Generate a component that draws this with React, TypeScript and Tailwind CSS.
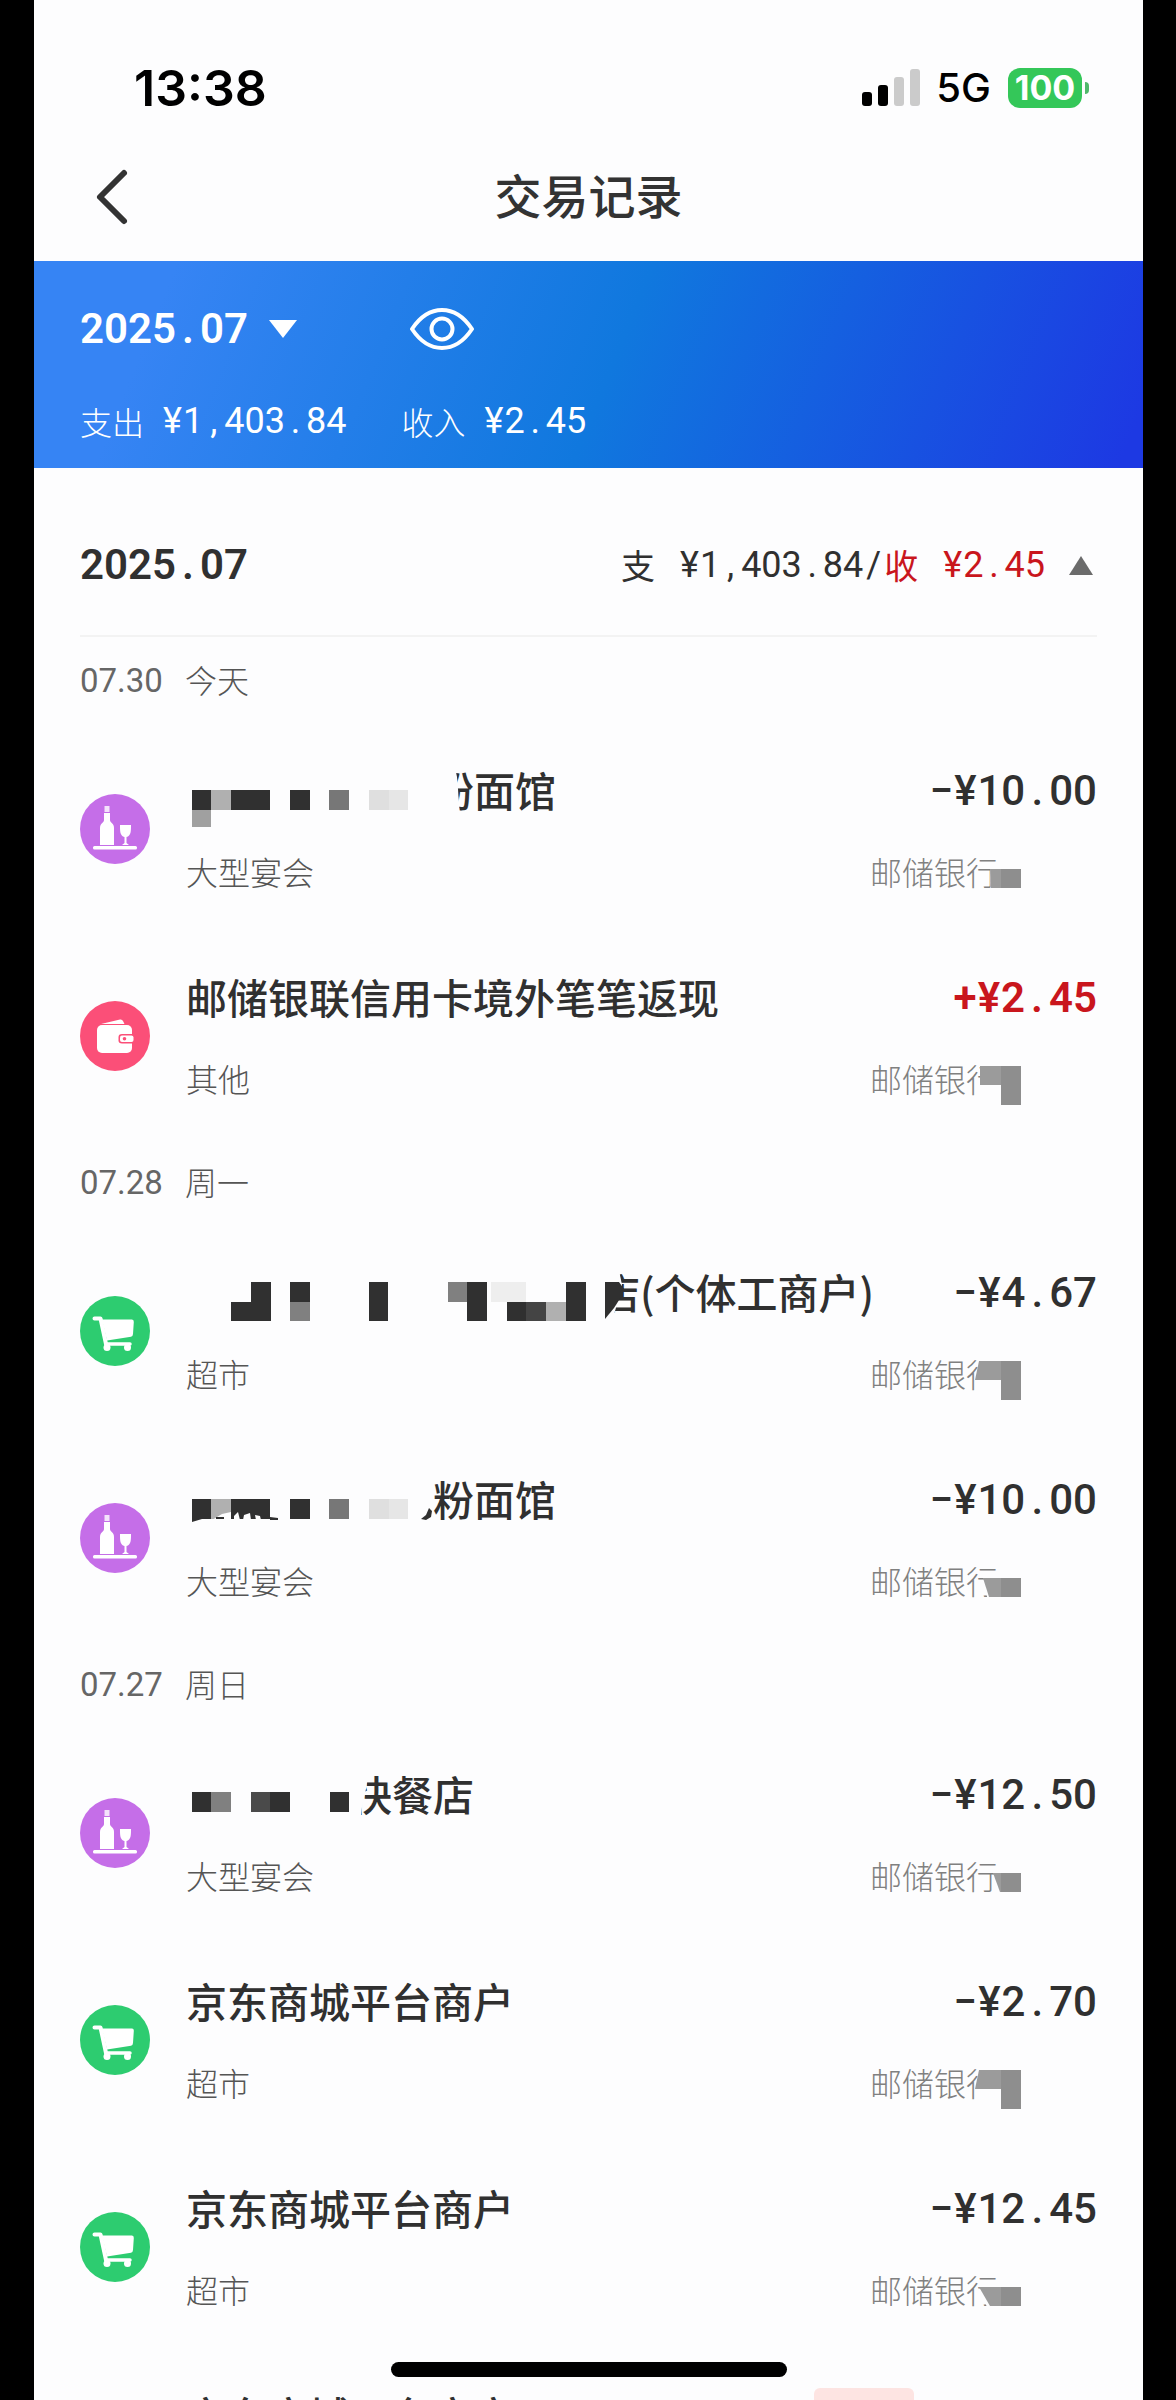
import React from "react";

type Category = "banquet" | "wallet" | "market";
type Rect = [number, number, number, number, string];

interface Mask {
    width: number;
    rects: Rect[];
    // erased parts of the neighbouring glyph
    erase?: string;
    // leftovers of dark strokes
    ink?: string;
}

interface Transaction {
    title: string;
    mask?: Mask;
    category: Category;
    label: string;
    amount: string;
    income?: boolean;
    bank: "low" | "tall";
    cut: [number, number];
}

interface DayGroup {
    date: string;
    day: string;
    items: Transaction[];
}

const DARK = "#303030";

const noodleRects: Rect[] = [
    [8, 27, 19, 20, DARK],
    [27, 27, 20, 20, "#b0b0b0"],
    [47, 27, 39, 20, DARK],
    [106, 27, 20, 20, DARK],
    [145, 27, 20, 20, "#777777"],
    [185, 27, 20, 20, "#dfdfdf"],
    [205, 27, 19, 20, "#e6e6e6"],
];

const groups: DayGroup[] = [
    {
        date: "07.30",
        day: "今天",
        items: [
            {
                title: "粉面馆",
                mask: { width: 247, rects: [...noodleRects, [8, 47, 19, 17, "#a0a0a0"]], erase: "M246 0H270L273 14L274 26L276 56H246Z" },
                category: "banquet",
                label: "大型宴会",
                amount: "−¥10.00",
                bank: "low",
                cut: [120, 121],
            },
            {
                title: "邮储银联信用卡境外笔笔返现",
                category: "wallet",
                label: "其他",
                amount: "+¥2.45",
                income: true,
                bank: "tall",
                cut: [110, 110],
            },
        ],
    },
    {
        date: "07.28",
        day: "周一",
        items: [
            {
                title: "店(个体工商户)",
                mask: {
                    width: 413,
                    rects: [
                        [47, 37, 20, 19, DARK],
                        [67, 17, 20, 39, DARK],
                        [106, 17, 20, 20, DARK],
                        [106, 37, 20, 19, "#808080"],
                        [185, 17, 19, 39, DARK],
                        [264, 17, 19, 20, "#808080"],
                        [283, 17, 20, 39, DARK],
                        [307, 17, 35, 20, "#eeeeee"],
                        [323, 37, 19, 19, DARK],
                        [342, 37, 20, 19, "#444444"],
                        [362, 37, 20, 19, "#b0b0b0"],
                        [382, 17, 20, 39, DARK],
                    ],
                    erase: "M412 0H434L438 20L434 36L428 56H412Z",
                    ink: "M421 17H435L440 24L437 32L430 43L421 54Z",
                },
                category: "market",
                label: "超市",
                amount: "−¥4.67",
                bank: "tall",
                cut: [109, 105],
            },
            {
                title: "粉面馆",
                mask: {
                    width: 247,
                    rects: noodleRects,
                    erase: "M28 48L38 42L47 40V48ZM50 48V44L54 40L56 48ZM59 48L60 43L66 41L67 48ZM72 48L71 43L76 44L77 48Z",
                    ink: "M237 47L242 43L245 36L248 39L247 45L242 48ZM86 45L94 46V48H86ZM8 47H18L8 50ZM32 45H40V47H32Z",
                },
                category: "banquet",
                label: "大型宴会",
                amount: "−¥10.00",
                bank: "low",
                cut: [113, 119],
            },
        ],
    },
    {
        date: "07.27",
        day: "周日",
        items: [
            {
                title: "快餐店",
                mask: {
                    width: 165,
                    rects: [
                        [8, 25, 19, 20, DARK],
                        [27, 25, 20, 20, "#808080"],
                        [67, 25, 19, 20, "#4a4a4a"],
                        [86, 25, 20, 20, DARK],
                        [146, 25, 19, 20, DARK],
                    ],
                    erase: "M166 0H185L182 22L178 40L176 56H166Z",
                },
                category: "banquet",
                label: "大型宴会",
                amount: "−¥12.50",
                bank: "low",
                cut: [123, 130],
            },
            {
                title: "京东商城平台商户",
                category: "market",
                label: "超市",
                amount: "−¥2.70",
                bank: "tall",
                cut: [109, 105],
            },
            {
                title: "京东商城平台商户",
                category: "market",
                label: "超市",
                amount: "−¥12.45",
                bank: "low",
                cut: [109, 120],
            },
        ],
    },
];

// Punctuation takes a full digit cell, so that amounts line up in columns
const Figures: React.FC<{ value: string; small?: boolean }> = ({ value, small }) => (
    <span className="block font-['Roboto','Noto_Sans_CJK_SC',sans-serif] whitespace-nowrap">
        {value.split(/([^0-9])/).filter(Boolean).map((part, i) =>
            /[0-9]/.test(part) ? (
                part
            ) : (
                <span key={i} className={small ? "inline-block w-[21px] text-center" : "inline-block w-[24px] text-center"}>
                    {part}
                </span>
            )
        )}
    </span>
);

const StatusBar: React.FC = () => (
    <div className="flex items-center justify-between pt-11 pl-[100px] pr-[54px] font-['Inter',sans-serif] text-black">
        <span className="text-[50px] leading-[88px] font-semibold">13:38</span>
        <div className="flex items-center">
            <svg className="w-[58px] h-[38px] mr-4" viewBox="0 0 58 38" aria-hidden="true">
                <rect x="0" y="23" width="10" height="14" rx="3" fill="#000" />
                <rect x="16" y="16" width="10" height="21" rx="3" fill="#000" />
                <rect x="32" y="8" width="10" height="29" rx="3" fill="#cbcbcb" />
                <rect x="48" y="0" width="10" height="37" rx="3" fill="#cbcbcb" />
            </svg>
            <span className="text-[40px] leading-[48px] font-medium mr-[17px]">5G</span>
            <span className="w-[74px] h-10 rounded-xl bg-[#34c759] text-white text-[34px] leading-10 font-bold text-center">100</span>
            <span className="w-1 h-3 ml-[3px] rounded-r-full bg-[#4fb86a]" />
        </div>
    </div>
);

const NavBar: React.FC = () => (
    <header className="grid grid-cols-[1fr_auto_1fr] items-center h-[129px] px-[46px]">
        <button type="button" aria-label="返回" className="justify-self-start p-3">
            <svg className="w-10 h-[62px]" viewBox="0 0 40 62" fill="none" stroke="#333" strokeWidth="6" strokeLinecap="round" strokeLinejoin="round">
                <path d="M32 7L8 31L32 55" />
            </svg>
        </button>
        <h1 className="pb-[6px] text-[47px] leading-[56px] font-medium text-[#333]">交易记录</h1>
    </header>
);

const MonthBanner: React.FC = () => (
    <section className="bg-[linear-gradient(112deg,#3684f4_12%,#1078de_52%,#1d39e3_98%)] text-white pt-[40px] pb-[23px] px-[46px]">
        <div className="flex items-center h-14">
            <button type="button" className="flex items-center gap-5 text-[42px] leading-[56px] font-semibold">
                <Figures value="2025.07" />
                <svg className="w-[30px] h-[18px]" viewBox="0 0 30 18" fill="currentColor" aria-hidden="true">
                    <path d="M1 0H29L15 18Z" />
                </svg>
            </button>
            <button type="button" aria-label="隐藏金额" className="ml-[112px]">
                <svg className="w-16 h-[42px]" viewBox="0 0 64 42" fill="none" stroke="currentColor" strokeWidth="4">
                    <path d="M2 21C10 9 20 2 32 2S54 9 62 21C54 33 44 40 32 40S10 33 2 21Z" strokeLinejoin="round" />
                    <circle cx="32" cy="21" r="10.500" />
                </svg>
            </button>
        </div>
        <div className="flex items-center gap-[55px] h-12 mt-10">
            <p className="flex items-center gap-[18px] text-[32px] leading-[44px] font-light">
                支出
                <span className="text-[36px] leading-[48px] font-normal"><Figures value="¥1,403.84" small /></span>
            </p>
            <p className="flex items-center gap-[18px] text-[32px] leading-[44px] font-light">
                收入
                <span className="text-[36px] leading-[48px] font-normal"><Figures value="¥2.45" small /></span>
            </p>
        </div>
    </section>
);

const MonthSummary: React.FC = () => (
    <div className="flex items-center justify-between h-[169px] pt-[27px] border-b-2 border-[#f3f3f3]">
        <h2 className="text-[42px] leading-[56px] font-semibold"><Figures value="2025.07" /></h2>
        <button type="button" className="flex items-center text-[36px] leading-[48px]">
            <span className="mr-6 text-[34px]">支</span>
            <Figures value="¥1,403.84/" small />
            <span className="mr-6 text-[34px] text-[#c9161d]">收</span>
            <span className="text-[#c9161d]"><Figures value="¥2.45" small /></span>
            <svg className="w-6 h-[19px] ml-6 mr-1" viewBox="0 0 24 19" fill="#6b6b6b" aria-hidden="true">
                <path d="M12 0L24 19H0Z" />
            </svg>
        </button>
    </div>
);

const CategoryIcon: React.FC<{ category: Category }> = ({ category }) => {
    if (category === "banquet") {
        return (
            <svg className="w-[70px] h-[70px] shrink-0" viewBox="0 0 70 70" aria-hidden="true">
                <circle cx="35" cy="35" r="35" fill="#c56ee8" />
                <g fill="#fff">
                    <path d="M24.500 12H29.500V18H24.500Z" opacity=".8" />
                    <path d="M24 19H30V26C30 29 34 29 34 34V51H20V34C20 29 24 29 24 26Z" />
                    <path d="M40 31H51C51 37 51 42 46.500 43V49L49 51H42L44.500 49V43C40 42 40 37 40 31Z" />
                    <rect x="13" y="52" width="44" height="3.500" rx="1.500" />
                </g>
            </svg>
        );
    }
    if (category === "wallet") {
        return (
            <svg className="w-[70px] h-[70px] shrink-0" viewBox="0 0 70 70" aria-hidden="true">
                <circle cx="35" cy="35" r="35" fill="#fb4f78" />
                <path d="M21 23L40 18.500Q42 18 43 20L44.500 23Z" fill="#fff" />
                <rect x="17" y="24" width="35" height="28" rx="5" fill="#fff" />
                <path d="M54 33H42Q38.500 33 38.500 36V39.500Q38.500 42.500 42 42.500H54Z" fill="#fb4f78" />
                <rect x="40" y="34.500" width="13.500" height="6.500" rx="2" fill="#fff" />
                <circle cx="44.500" cy="37.800" r="1.800" fill="#fb4f78" />
            </svg>
        );
    }
    return (
        <svg className="w-[70px] h-[70px] shrink-0" viewBox="0 0 70 70" aria-hidden="true">
            <circle cx="35" cy="35" r="35" fill="#2dcc70" />
            <g stroke="#fff" strokeLinecap="round" strokeLinejoin="round" fill="none">
                <path d="M14.500 22.500H20.500L26 48" strokeWidth="4" />
                <path d="M26 48H50" strokeWidth="3.500" />
            </g>
            <path d="M22 23.500H52Q54 23.500 53.800 26L53 38Q52.800 40.500 51 40.800L27 44.500Z" fill="#fff" />
            <circle cx="27" cy="51.500" r="3.500" fill="#fff" />
            <circle cx="47.500" cy="51.500" r="3.500" fill="#fff" />
        </svg>
    );
};

const TitleMask: React.FC<{ mask: Mask }> = ({ mask }) => (
    <svg className="relative shrink-0 overflow-visible" width={mask.width} height="56" viewBox={`2 0 ${mask.width} 56`} aria-hidden="true">
        {mask.rects.map(([x, y, w, h, fill]) => (
            <rect key={`${x}-${y}`} x={x} y={y} width={w} height={h} fill={fill} />
        ))}
        {mask.erase && <path d={mask.erase} fill="#fdfdfe" />}
        {mask.ink && <path d={mask.ink} fill={DARK} />}
    </svg>
);

const BankMask: React.FC<{ kind: "low" | "tall"; cut: [number, number] }> = ({ kind, cut }) => {
    const top = kind === "low" ? 22 : 12;
    const bottom = top + 19;
    return (
        <svg className="absolute left-0 top-0" width="152" height="52" aria-hidden="true">
            <path
                d={kind === "low" ? `M${cut[0]} ${top - 4}H152V52H${cut[1]}Z` : `M${cut[0]} 0H152V52H${cut[0]}Z`}
                fill="#fdfdfe"
            />
            <path d={`M${cut[0]} ${top}H132V${bottom}H${cut[1]}Z`} fill="#9b9b9b" />
            <rect x="131" y={top} width="20" height={kind === "low" ? 19 : 39} fill="#8e8e8e" />
        </svg>
    );
};

const TransactionRow: React.FC<{ item: Transaction }> = ({ item }) => (
    <li className="flex items-center gap-9 pt-[38px] pb-[37px]">
        <CategoryIcon category={item.category} />
        <div className="flex-1 min-w-0">
            <div className="flex items-start justify-between">
                <h3 className="flex text-[41px] leading-[52px] font-medium whitespace-nowrap">
                    {item.mask && <TitleMask mask={item.mask} />}
                    {item.title}
                </h3>
                <span className={item.income ? "text-[42px] leading-[56px] font-semibold text-[#c9161d]" : "text-[42px] leading-[56px] font-medium"}>
                    <Figures value={item.amount} />
                </span>
            </div>
            <div className="flex items-center justify-between mt-7 text-[32px] leading-[48px] font-light">
                <span className="text-[#555]">{item.label}</span>
                <span className="relative w-[227px] text-[#808080]">
                    邮储银行
                    <BankMask kind={item.bank} cut={item.cut} />
                </span>
            </div>
        </div>
    </li>
);

export default function App() {
    return (
        <div className="h-screen overflow-hidden bg-black pl-[34px] pr-[33px] font-['Noto_Sans_CJK_SC',sans-serif]">
            <div className="relative h-full overflow-hidden bg-[#fdfdfe] text-[#303030]">
                <StatusBar />
                <NavBar />
                <MonthBanner />
                <main className="px-[46px]">
                    <MonthSummary />
                    {groups.map((group) => (
                        <section key={group.date}>
                            <p className="flex items-center gap-[22px] h-[88px] text-[32px] text-[#666]">
                                <span className="font-['Roboto',sans-serif] text-[33px]">{group.date}</span>
                                <span className="pb-1 font-light text-[#555]">{group.day}</span>
                            </p>
                            <ul>
                                {group.items.map((item, i) => (
                                    <TransactionRow key={i} item={item} />
                                ))}
                            </ul>
                        </section>
                    ))}

                    {/* Refunded order, partly scrolled under the bottom edge */}
                    <div className="flex justify-between pt-[38px] pl-[106px]">
                        <h3 className="text-[41px] leading-[52px] font-medium">京东商城平台商户</h3>
                        <div className="flex gap-10">
                            <span className="w-[100px] h-[52px] rounded-md bg-[#fde4e2] text-[28px] leading-[52px] text-center text-[#c9161d]">已退款</span>
                            <span className="text-[42px] leading-[56px] font-medium text-[#dcc8c8]">
                                <Figures value="¥17.65" />
                            </span>
                        </div>
                    </div>
                </main>

                {/* Home indicator */}
                <div className="absolute bottom-[23px] left-1/2 -translate-x-1/2 w-[396px] h-[15px] rounded-full bg-black" />
            </div>
        </div>
    );
}
